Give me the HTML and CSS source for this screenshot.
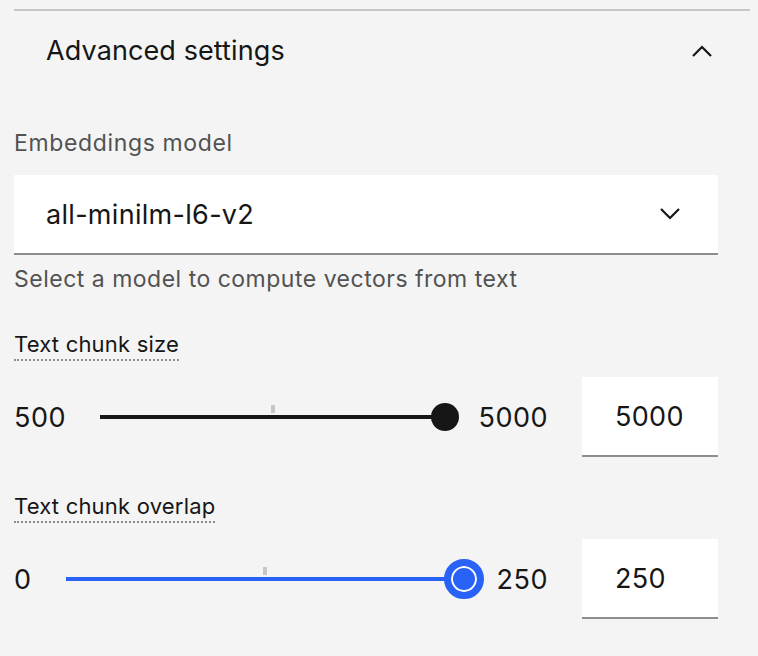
FILE: index.html
```html
<!DOCTYPE html>
<html lang="en">
<head>
<meta charset="utf-8">
<title>Advanced settings</title>
<link rel="stylesheet" href="styles.css">
</head>
<body>
<div class="accordion">
  <div class="accordion-item">
    <div class="accordion-heading">
      <span class="accordion-title">Advanced settings</span>
      <svg class="chevron" width="20" height="12" viewBox="0 0 20 12" aria-hidden="true">
        <path d="M1 11 L10 2 L19 11" fill="none" stroke="#161616" stroke-width="2.2"/>
      </svg>
    </div>
    <div class="accordion-content">
      <div class="form-item">
        <label class="label">Embeddings model</label>
        <div class="select">
          <span class="select-value">all-minilm-l6-v2</span>
          <svg class="chevron" width="20" height="12" viewBox="0 0 20 12" aria-hidden="true">
            <path d="M1 1 L10 10 L19 1" fill="none" stroke="#161616" stroke-width="2.2"/>
          </svg>
        </div>
        <div class="helper">Select a model to compute vectors from text</div>
      </div>

      <div class="form-item">
        <div><span class="def-label">Text chunk size</span></div>
        <div class="slider-row">
          <span class="range-label">500</span>
          <div class="track-wrap">
            <div class="track dark"></div>
            <span class="tick"></span>
            <span class="thumb" style="left: 100%"></span>
          </div>
          <span class="range-label">5000</span>
          <div class="num-input">5000</div>
        </div>
      </div>

      <div class="form-item">
        <div><span class="def-label">Text chunk overlap</span></div>
        <div class="slider-row">
          <span class="range-label">0</span>
          <div class="track-wrap">
            <div class="track blue"></div>
            <span class="tick"></span>
            <span class="thumb focused" style="left: 100%"></span>
          </div>
          <span class="range-label">250</span>
          <div class="num-input">250</div>
        </div>
      </div>
    </div>
  </div>
</div>
</body>
</html>
```

FILE: styles.css
```css
* { box-sizing: border-box; }

html, body {
  margin: 0;
  padding: 0;
  background: #f4f4f4;
}

body {
  font-family: "Inter", "Noto Sans", sans-serif;
  color: #161616;
}

.accordion {
  padding: 9px 8px 0 14px;
}

.accordion-item {
  border-top: 2px solid #c6c6c6;
}

.accordion-heading {
  height: 80px;
  display: flex;
  align-items: center;
  justify-content: space-between;
  padding: 0 38px 0 32px;
}

.accordion-title {
  font-size: 27px;
  line-height: 40px;
  letter-spacing: 0.1px;
  color: #161616;
}

.accordion-content {
  padding: 36px 32px 0 0;
}

.form-item {
  margin-bottom: 34px;
}

.label {
  display: block;
  font-size: 23px;
  line-height: 32px;
  letter-spacing: 0.64px;
  color: #525252;
  margin-bottom: 16px;
}

.select {
  height: 80px;
  background: #ffffff;
  border-bottom: 2px solid #8d8d8d;
  display: flex;
  align-items: center;
  justify-content: space-between;
  padding: 0 38px 0 32px;
}

.select-value {
  font-size: 27px;
  letter-spacing: 0.3px;
  color: #161616;
}

.helper {
  margin-top: 8px;
  font-size: 23px;
  line-height: 32px;
  letter-spacing: 0.5px;
  color: #525252;
}

.def-label {
  display: inline-block;
  font-size: 22px;
  line-height: 30px;
  letter-spacing: 0.2px;
  color: #161616;
  border-bottom: 2px dotted #8d8d8d;
}

.slider-row {
  margin-top: 16px;
  display: flex;
  align-items: center;
  height: 80px;
}

.range-label {
  font-size: 27px;
  letter-spacing: 0.5px;
  color: #161616;
}

.track-wrap {
  flex: 1;
  position: relative;
  height: 40px;
  margin: 0 33px 0 34px;
  display: flex;
  align-items: center;
}

.track {
  width: 100%;
  height: 4px;
}

.track.dark { background: #161616; }
.track.blue { background: #2962f6; }

.tick {
  position: absolute;
  left: 50%;
  top: 8px;
  width: 4px;
  height: 8px;
  margin-left: -2px;
  background: #c6c6c6;
}

.thumb {
  position: absolute;
  top: 50%;
  width: 28px;
  height: 28px;
  border-radius: 50%;
  background: #161616;
  transform: translate(-50%, -50%);
}

.thumb.focused {
  width: 40px;
  height: 40px;
  background: #2962f6;
  border: 7px solid #2962f6;
  box-shadow: inset 0 0 0 2px #ffffff;
}

.num-input {
  margin-left: 34px;
  width: 136px;
  height: 80px;
  background: #ffffff;
  border-bottom: 2px solid #8d8d8d;
  display: flex;
  align-items: center;
  padding-left: 33px;
  font-size: 27px;
  letter-spacing: 0.3px;
  color: #161616;
}
```
